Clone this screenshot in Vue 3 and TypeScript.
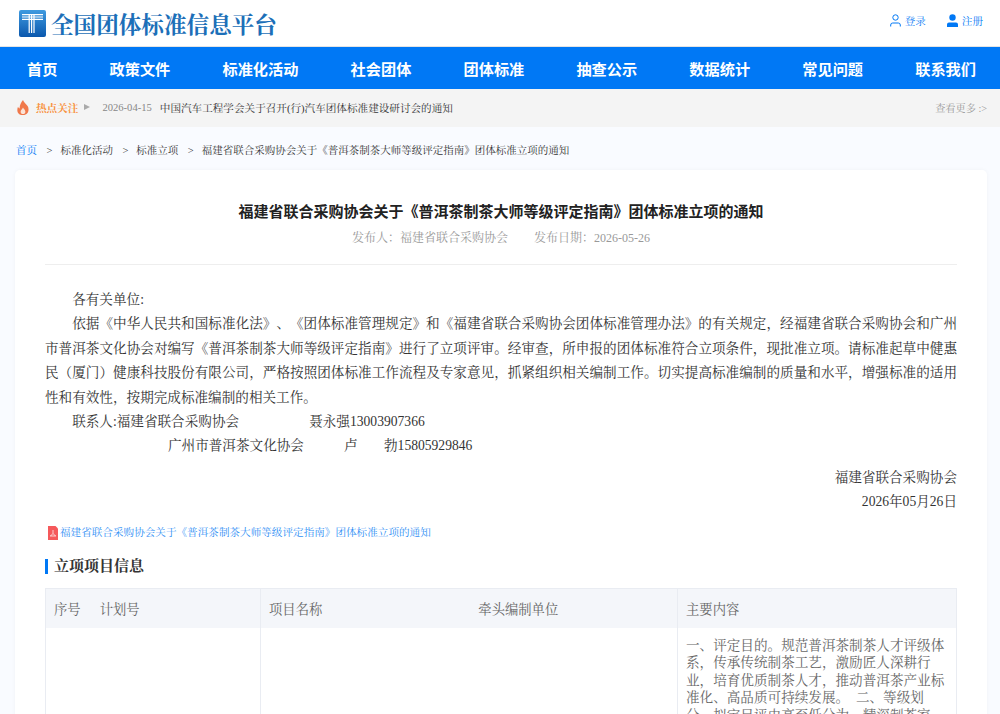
<script setup lang="ts">
const navItems = ['首页', '政策文件', '标准化活动', '社会团体', '团体标准', '抽查公示', '数据统计', '常见问题', '联系我们']
const crumbs = ['标准化活动', '标准立项', '福建省联合采购协会关于《普洱茶制茶大师等级评定指南》团体标准立项的通知']
</script>

<template>
  <div class="page">
    <header class="top">
      <div class="brand">
        <svg class="logo" width="27" height="27" viewBox="0 0 27 27">
          <defs>
            <linearGradient id="lg" x1="0" y1="0" x2="0" y2="1">
              <stop offset="0" stop-color="#3f9be0" />
              <stop offset="1" stop-color="#0a57ad" />
            </linearGradient>
          </defs>
          <rect width="27" height="27" rx="2" fill="url(#lg)" />
          <path d="M3 4h21v1.2H3zM3 6.400h21v1.200H3zM3 8.800h21V10H3z" fill="#fff" />
          <path d="M9.600 4h1.200v19H9.600zM12 4h1.200v19H12zM14.400 4h1.200v19h-1.200z" fill="#fff" />
        </svg>
        <span class="brand-name">全国团体标准信息平台</span>
      </div>
      <div class="user">
        <a class="user-link">
          <svg width="11" height="13" viewBox="0 0 11 13" fill="none" stroke="#0078f5">
            <circle cx="5.500" cy="3.500" r="2.700" />
            <path d="M.7 12.500V11a2 2 0 0 1 2-2h5.600a2 2 0 0 1 2 2v1.500" />
          </svg>
          登录
        </a>
        <a class="user-link">
          <svg width="11" height="13" viewBox="0 0 11 13" fill="#0078f5">
            <circle cx="5.500" cy="3.500" r="3.200" />
            <path d="M0 13v-2.500a2 2 0 0 1 2-2h7a2 2 0 0 1 2 2V13z" />
          </svg>
          注册
        </a>
      </div>
    </header>

    <nav class="nav">
      <a v-for="item in navItems" :key="item">{{ item }}</a>
    </nav>

    <div class="hot">
      <svg class="fire" width="12" height="15" viewBox="0 0 12 15">
        <path d="M6 0c.6 2.400 3 3.600 4.600 6 1.800 2.800 1.400 9-4.600 9S-.4 10 1 6.800c.4 1 1 1.600 1.700 1.800C2.400 5.600 4 2.600 6 0z" fill="#f0784a" />
        <path d="M6 7.500c.4 1.300 2.400 2.300 2.400 4.200 0 1.500-1 2.300-2.400 2.300s-2.400-.8-2.400-2.300C3.600 10 5.600 9 6 7.500z" fill="#fbe3d6" />
      </svg>
      <span class="hot-label">热点关注</span>
      <span class="hot-arrow"></span>
      <span class="hot-date">2026-04-15</span>
      <span class="hot-title">中国汽车工程学会关于召开(行)汽车团体标准建设研讨会的通知</span>
      <span class="hot-more">查看更多 :&gt;</span>
    </div>

    <div class="crumbs">
      <a class="home">首页</a>
      <template v-for="c in crumbs" :key="c">
        <span class="sep">&gt;</span>
        <span>{{ c }}</span>
      </template>
    </div>

    <main class="card">
      <h1>福建省联合采购协会关于《普洱茶制茶大师等级评定指南》团体标准立项的通知</h1>
      <div class="meta">
        <span>发布人：福建省联合采购协会</span>
        <span>发布日期：2026-05-26</span>
      </div>

      <div class="article">
        <p class="indent">各有关单位:</p>
        <p class="indent">依据《中华人民共和国标准化法》、《团体标准管理规定》和《福建省联合采购协会团体标准管理办法》的有关规定，经福建省联合采购协会和广州市普洱茶文化协会对编写《普洱茶制茶大师等级评定指南》进行了立项评审。经审查，所申报的团体标准符合立项条件，现批准立项。请标准起草中健惠民（厦门）健康科技股份有限公司，严格按照团体标准工作流程及专家意见，抓紧组织相关编制工作。切实提高标准编制的质量和水平，增强标准的适用性和有效性，按期完成标准编制的相关工作。</p>
        <p class="indent contact"><span class="c-org">联系人:福建省联合采购协会</span><span>聂永强13003907366</span></p>
        <p class="contact second"><span class="c-org2">广州市普洱茶文化协会</span><span class="c-name">卢</span><span>勃15805929846</span></p>
        <p class="sign first">福建省联合采购协会</p>
        <p class="sign">2026年05月26日</p>
      </div>

      <a class="attach">
        <svg width="10" height="14" viewBox="0 0 10 14">
          <path d="M0 0h7.500L10 2.500V14H0z" fill="#f5595b" />
          <path d="M5 4v3.500M2 10h6M5 7.500L2.500 10M5 7.500L7.500 10" stroke="#fff" stroke-width=".7" fill="none" />
        </svg>
        福建省联合采购协会关于《普洱茶制茶大师等级评定指南》团体标准立项的通知
      </a>

      <h2>立项项目信息</h2>

      <div class="table">
        <div class="cell head c1"><span>序号</span><span>计划号</span></div>
        <div class="cell head c2"><span>项目名称</span><span class="lead">牵头编制单位</span></div>
        <div class="cell head c3">主要内容</div>
        <div class="cell c1"></div>
        <div class="cell c2"></div>
        <div class="cell c3 body">一、评定目的。规范普洱茶制茶人才评级体系，传承传统制茶工艺，激励匠人深耕行业，培育优质制茶人才，推动普洱茶产业标准化、高品质可持续发展。&ensp;二、等级划分。拟定目评由高至低分为，精深制茶家</div>
      </div>
    </main>
  </div>
</template>

<style scoped>
.page {
  height: 714px;
  overflow: hidden;
  background: #f9fbff;
  font-family: "Liberation Serif", "Noto Serif CJK SC", "Source Han Serif SC", "AR PL UMing CN", "SimSun", serif;
  text-spacing-trim: space-all;
}

.top {
  height: 47px;
  box-sizing: border-box;
  background: #fff;
  display: flex;
  align-items: center;
  justify-content: space-between;
  padding: 0 17px 0 19px;
  border-bottom: 1px solid #e4e4e4;
}

.brand {
  display: flex;
  align-items: center;
  gap: 5px;
}

.logo {
  display: block;
}

.brand-name {
  font-size: 22.600px;
  font-weight: bold;
  color: #1c6fb8;
}

.user {
  display: flex;
  gap: 21px;
  margin-top: -6px;
}

.user-link {
  display: flex;
  align-items: center;
  gap: 4px;
  font-size: 10.600px;
  color: #0078f5;
}

.nav {
  height: 42px;
  background: #0078f5;
  display: flex;
  align-items: center;
  justify-content: space-between;
  padding: 0 24px 0 27px;
  font: bold 15.200px "Noto Sans CJK SC", sans-serif;
  color: #fff;
}

.hot {
  height: 38px;
  box-sizing: border-box;
  background: #f4f4f4;
  display: flex;
  align-items: center;
  padding: 0 13px 2px 17px;
  font-size: 10.600px;
}

.fire {
  margin-right: 7px;
}

.hot-label {
  color: #f8923f;
  font-weight: bold;
}

.hot-arrow {
  width: 0;
  height: 0;
  margin: 0 12px 0 6px;
  border-left: 6px solid #aaa;
  border-top: 3px solid transparent;
  border-bottom: 3px solid transparent;
}

.hot-date {
  color: #888;
  margin-right: 8px;
}

.hot-title {
  color: #333;
}

.hot-more {
  margin-left: auto;
  color: #999;
  font-size: 10.200px;
}

.crumbs {
  display: flex;
  gap: 8px;
  padding: 16px 16px 12px;
  font-size: 10.500px;
  line-height: 15px;
  color: #333;
}

.home {
  color: #0078f5;
}

.sep {
  margin-left: 1.500px;
}

.card {
  margin: 0 13px 0 15px;
  padding: 30px 30px 0;
  background: #fff;
  border-radius: 5px;
  box-shadow: 0 0 4px rgba(0, 0, 50, 0.04);
}

h1 {
  margin: 0;
  text-align: center;
  font: bold 15px/22px "Noto Sans CJK SC", sans-serif;
  color: #222;
}

.meta {
  display: flex;
  justify-content: center;
  gap: 26px;
  margin-top: 8px;
  padding-bottom: 18px;
  border-bottom: 1px solid #eee;
  font-size: 12px;
  line-height: 16px;
  color: #999;
}

.article {
  margin-top: 23px;
  font-size: 13.600px;
  line-height: 24.400px;
  color: #333;
}

.article p {
  margin: 0;
  text-align: justify;
}

.indent {
  text-indent: 2em;
}

.contact {
  display: flex;
}

.c-org {
  width: 237px;
}

.article .second {
  padding-left: 123px;
}

.c-org2 {
  width: 176px;
}

.c-name {
  width: 40px;
}

.article .sign {
  text-align: right;
}

.article .first {
  margin-top: 7px;
}

.attach {
  display: flex;
  align-items: center;
  gap: 2px;
  margin-top: 10px;
  padding-left: 3px;
  font-size: 10.600px;
  line-height: 16px;
  color: #2f8ff5;
}

h2 {
  margin: 18px 0 0;
  padding-left: 6px;
  border-left: 3px solid #0078f5;
  font-size: 15px;
  line-height: 15px;
  font-weight: bold;
  color: #333;
}

.table {
  display: grid;
  grid-template-columns: 215px 417px 280px;
  margin-top: 14px;
  border-top: 1px solid #e9ecf2;
  font-size: 13.600px;
  color: #666;
}

.cell {
  padding: 9px 8px;
  border-left: 1px solid #e9ecf2;
  box-sizing: border-box;
}

.cell.c3 {
  border-right: 1px solid #e9ecf2;
}

.head {
  background: #f4f6fa;
  height: 39px;
  padding: 0 8px;
  display: flex;
  align-items: center;
  gap: 19px;
  font-size: 13.330px;
}

.lead {
  margin-left: 137px;
}

.body {
  line-height: 17.500px;
}
</style>

<style>
html,
body {
  margin: 0;
}
</style>
